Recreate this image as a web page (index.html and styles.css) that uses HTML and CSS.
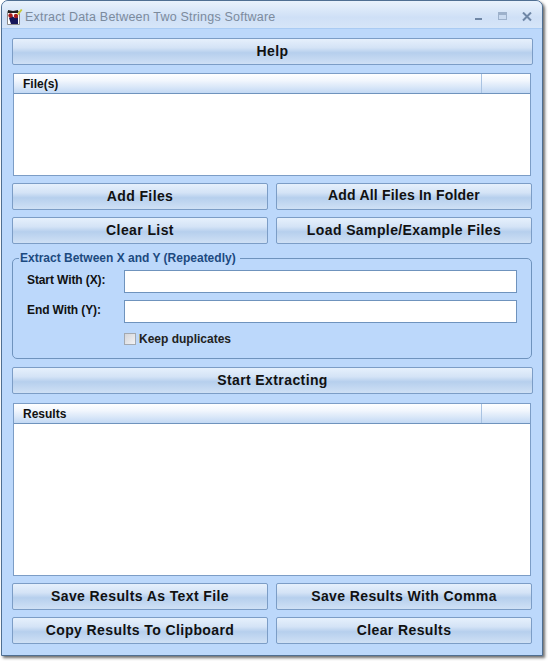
FILE: index.html
```html
<!DOCTYPE html>
<html lang="en">
<head>
    <meta charset="UTF-8">
    <title>Extract Data Between Two Strings Software</title>
    <link rel="stylesheet" href="styles.css">
</head>
<body>

    <div class="window">
        <div class="titlebar">
            <svg class="app-icon" width="17" height="18" viewBox="0 0 17 18">
                <path d="M1.5 3.5h12v13h-12z" fill="#fff" stroke="#8a8a8a" stroke-width="1"/>
                <path d="M2 2l5 1 5-1v3H2z" fill="#222"/>
                <path d="M3 10l3-2 3 2 3-1v7H5z" fill="#16165a"/>
                <circle cx="4.5" cy="7.5" r="2.2" fill="#a81c1c"/>
                <circle cx="10" cy="8" r="2.2" fill="#a81c1c"/>
                <path d="M11 6l4-5 1.5 1-4 5z" fill="#c6c83a"/>
            </svg>
            <span class="title-text">Extract Data Between Two Strings Software</span>
            <div class="window-controls">
                <svg width="10" height="10" viewBox="0 0 10 10"><rect x="1" y="6" width="7" height="2" fill="#6f87a6"/></svg>
                <svg width="10" height="10" viewBox="0 0 10 10"><rect x="0.5" y="0.5" width="8" height="7" fill="#c9daf0" stroke="#9db1cb"/><rect x="1" y="1" width="7" height="2" fill="#9db1cb"/></svg>
                <svg width="10" height="10" viewBox="0 0 10 10"><path d="M1 0.5l8 8M9 0.5l-8 8" stroke="#6f87a6" stroke-width="2"/></svg>
            </div>
        </div>

        <div class="client">
            <button class="btn btn-help">Help</button>

            <div class="list list-files">
                <div class="list-head"><span class="col-main">File(s)</span><span class="col-rest"></span></div>
            </div>

            <div class="btn-row row-add">
                <button class="btn">Add Files</button>
                <button class="btn btn-tight">Add All Files In Folder</button>
            </div>
            <div class="btn-row row-clear">
                <button class="btn">Clear List</button>
                <button class="btn">Load Sample/Example Files</button>
            </div>

            <fieldset class="group">
                <legend>Extract Between X and Y (Repeatedly)</legend>
                <div class="field field-start">
                    <label>Start With (X):</label>
                    <input type="text">
                </div>
                <div class="field">
                    <label>End With (Y):</label>
                    <input type="text">
                </div>
                <div class="check-line">
                    <span class="check"></span>
                    <span>Keep duplicates</span>
                </div>
            </fieldset>

            <button class="btn btn-start">Start Extracting</button>

            <div class="list list-results">
                <div class="list-head"><span class="col-main">Results</span><span class="col-rest"></span></div>
            </div>

            <div class="btn-row row-save">
                <button class="btn">Save Results As Text File</button>
                <button class="btn">Save Results With Comma</button>
            </div>
            <div class="btn-row row-copy">
                <button class="btn">Copy Results To Clipboard</button>
                <button class="btn">Clear Results</button>
            </div>
        </div>
    </div>

</body>
</html>
```

FILE: styles.css
```css
html, body { margin: 0; padding: 0; background: #fff; }
body { font-family: "Liberation Sans", Arial, sans-serif; width: 550px; height: 662px; overflow: hidden; }

.window { width: 542px; height: 656px; margin-left: 1px; box-sizing: border-box; border: 1px solid #4f6f92; border-radius: 7px 7px 0 0; background: #bcd8fb; box-shadow: 2px 2px 3px rgba(60, 60, 60, 0.75); }

.titlebar { height: 28px; box-sizing: border-box; display: flex; align-items: center; padding: 4px 6px 0 4px; border-bottom: 1px solid #a9cbf3; border-radius: 6px 6px 0 0; background: linear-gradient(#e9f2fc, #cfe0f6 60%, #d6e5f8); }
.app-icon { flex: none; margin-right: 2px; }
.title-text { font-size: 12.5px; color: #7c8b9d; letter-spacing: 0.2px; padding-top: 1px; }
.window-controls { margin-left: auto; display: flex; gap: 14px; padding-right: 4px; }

.client { padding: 9px 9px 0 10px; }

.btn { display: block; height: 27px; width: 100%; box-sizing: border-box; padding: 0 0 2px; border: 1px solid #7c9dc6; border-radius: 2px; background: linear-gradient(#e6f0fc, #d4e3f6 35%, #b6cfed 55%, #cfe0f5); font-family: "Liberation Sans", Arial, sans-serif; font-size: 14px; font-weight: bold; letter-spacing: 0.4px; color: #111; }
.btn-tight { letter-spacing: 0.2px; padding-bottom: 3px; }
.btn-help { margin-bottom: 8px; }
.btn-start { margin-top: 8px; margin-bottom: 9px; }

.list { margin: 0 1px 0 1px; width: 518px; box-sizing: border-box; border: 1px solid #7c9dc6; background: #fff; }
.list-files { height: 103px; }
.list-results { height: 173px; }
.list-head { height: 20px; box-sizing: border-box; display: flex; border-bottom: 1px solid #6f93bd; background: linear-gradient(#fff, #f1f6fd 35%, #c3d9f4); font-size: 12px; font-weight: bold; color: #111; line-height: 21px; }
.col-main { width: 468px; box-sizing: border-box; padding-left: 9px; border-right: 1px solid #a9c3e2; }

.btn-row { display: grid; grid-template-columns: 256px 256px; column-gap: 8px; }
.row-add { margin-top: 7px; }
.row-clear { margin-top: 7px; }
.row-save { margin-top: 7px; }
.row-copy { margin-top: 7px; }

.group { margin: 7px 0 0; width: 520px; height: 108px; box-sizing: border-box; padding: 0 14px 0 14px; border: 1px solid #6f93bd; border-radius: 5px; }
.group legend { padding: 0 4px 0 1px; margin-left: -8px; font-size: 12px; font-weight: bold; color: #1c4a80; line-height: 14px; }

.field { display: flex; align-items: center; height: 23px; margin-bottom: 7px; font-size: 12px; font-weight: bold; letter-spacing: -0.1px; color: #111; }
.field-start { margin-top: 5px; }
.field label { width: 97px; flex: none; padding-bottom: 4px; }
.field input { width: 393px; height: 23px; box-sizing: border-box; border: 1px solid #6f93bd; background: #fff; padding: 0; }

.check-line { display: flex; align-items: center; margin-left: 97px; margin-top: 9px; font-size: 12px; font-weight: bold; color: #222; }
.check { width: 10px; height: 10px; margin-right: 3px; border: 1px solid #a3a9b1; background: linear-gradient(135deg, #d5d6da, #f2f2f4); }
```
